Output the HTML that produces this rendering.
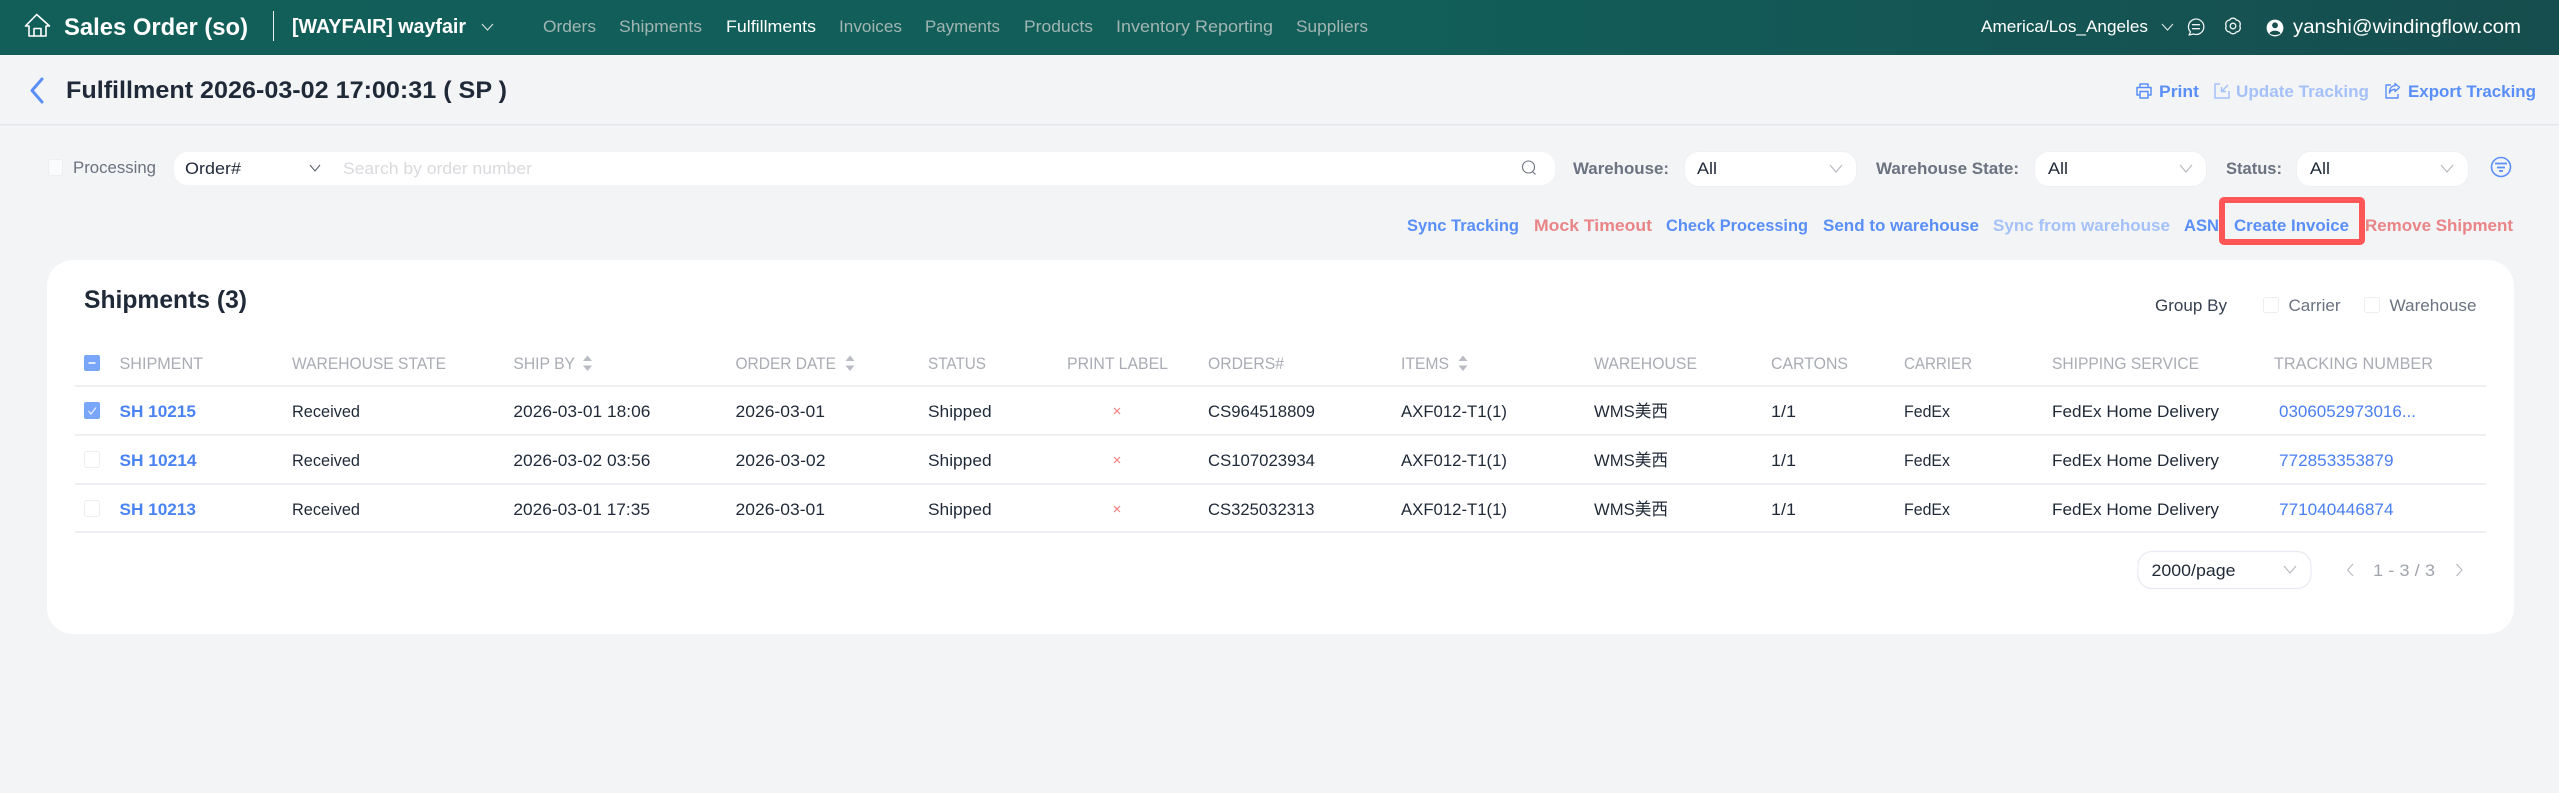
<!DOCTYPE html>
<html lang="en">
<head>
<meta charset="utf-8">
<title>Fulfillment 2026-03-02 17:00:31 ( SP )</title>
<style>
html,body{margin:0;padding:0;background:#f3f4f6;width:2559px;height:793px;overflow:hidden}
svg{display:block}
text{font-family:"Liberation Sans","Noto Sans CJK SC",sans-serif;font-size:17px;fill:#1f2937}
.b{font-weight:700}
.nav{fill:#a2b5b3}
.th{fill:#a9acb3}
.lnk{fill:#4a83f2;font-weight:700}
.trk{fill:#4a7ff2}
.act{fill:#5a8ff8;font-weight:700}
.dis{fill:#a5c1f9;font-weight:700}
.red{fill:#e98487;font-weight:700}
.lab{fill:#6b7280;font-weight:700}
.mut{fill:#6b7280}
.line{stroke:#e9eaee;stroke-width:1.6}
.chev{fill:none;stroke:#b4b7bd;stroke-width:1.1}
.cb{fill:#fff;stroke:#eceef1;stroke-width:1}
.sel{fill:#fff;stroke:#eef0f3;stroke-width:1}
.sort{fill:#b9bcc4}
.x{stroke:#f57f7f;stroke-width:1.2;fill:none}
</style>
</head>
<body>
<svg width="2559" height="793" viewBox="0 0 2559 793" xmlns="http://www.w3.org/2000/svg">
<defs>
<linearGradient id="hd" x1="0" x2="1" y1="0" y2="0">
<stop offset="0" stop-color="#125f5a"/><stop offset="0.55" stop-color="#125e59"/><stop offset="1" stop-color="#164d4e"/>
</linearGradient>
</defs>
<rect width="2559" height="793" fill="#f3f4f6"/>

<!-- top bar -->
<rect width="2559" height="55" fill="url(#hd)"/>
<g fill="none" stroke="#fff" stroke-width="1.6" stroke-linejoin="round" stroke-linecap="round">
<path d="M25.5 26 L36.7 14.5 L49.5 26 L46 26 L46 36 L29 36 L29 26 Z"/>
<path d="M34 36 V28.5 H41 V36"/>
</g>
<text x="64" y="35" class="b" style="font-size:24px;fill:#fff" textLength="184" lengthAdjust="spacingAndGlyphs">Sales Order (so)</text>
<rect x="273" y="11" width="1" height="30" fill="#e6eeee"/>
<text x="292" y="33" class="b" style="font-size:20px;fill:#fff" textLength="174" lengthAdjust="spacingAndGlyphs">[WAYFAIR] wayfair</text>
<path d="M482 24 L487.5 30 L493 24" fill="none" stroke="#cfdcdb" stroke-width="1.2"/>
<text x="543" y="32" class="nav" textLength="53" lengthAdjust="spacingAndGlyphs">Orders</text>
<text x="619" y="32" class="nav" textLength="83" lengthAdjust="spacingAndGlyphs">Shipments</text>
<text x="726" y="32" style="fill:#fff" textLength="90" lengthAdjust="spacingAndGlyphs">Fulfillments</text>
<text x="839" y="32" class="nav" textLength="63" lengthAdjust="spacingAndGlyphs">Invoices</text>
<text x="925" y="32" class="nav" textLength="75" lengthAdjust="spacingAndGlyphs">Payments</text>
<text x="1024" y="32" class="nav" textLength="69" lengthAdjust="spacingAndGlyphs">Products</text>
<text x="1116" y="32" class="nav" textLength="157" lengthAdjust="spacingAndGlyphs">Inventory Reporting</text>
<text x="1296" y="32" class="nav" textLength="72" lengthAdjust="spacingAndGlyphs">Suppliers</text>

<text x="1981" y="32" style="fill:#fff" textLength="167" lengthAdjust="spacingAndGlyphs">America/Los_Angeles</text>
<path d="M2162 24 L2167.5 30 L2173 24" fill="none" stroke="#dbe6e5" stroke-width="1.1"/>
<g fill="none" stroke="#eef4f3" stroke-width="1.3" stroke-linecap="round" stroke-linejoin="round">
<path d="M2190.5 32 A7.7 7.7 0 1 1 2193.5 34 L2189 35 Z"/>
<path d="M2192.5 24.7 H2199.5 M2192.5 28.7 H2199.5"/>
<path d="M2229.6 20.1 A4 4 0 0 1 2236.4 20.1 A4 4 0 0 1 2239.8 26 A4 4 0 0 1 2236.4 31.9 A4 4 0 0 1 2229.6 31.9 A4 4 0 0 1 2226.2 26 A4 4 0 0 1 2229.6 20.1 Z"/>
<circle cx="2233" cy="26" r="2.8"/>
</g>
<circle cx="2275" cy="28" r="8.4" fill="#fff"/>
<circle cx="2275" cy="25.3" r="2.9" fill="#15504f"/>
<path d="M2269.5 33.5 C2270.5 29.8 2279.5 29.8 2280.5 33.5 C2278 35.5 2272 35.5 2269.5 33.5 Z" fill="#15504f"/>
<text x="2293" y="33" style="font-size:19px;fill:#fff" textLength="228" lengthAdjust="spacingAndGlyphs">yanshi@windingflow.com</text>

<!-- title row -->
<path d="M42 79 L32 90.5 L42 102" fill="none" stroke="#5a8ff8" stroke-width="3" stroke-linejoin="round" stroke-linecap="round"/>
<text x="66" y="98" class="b" style="font-size:24px" textLength="441" lengthAdjust="spacingAndGlyphs">Fulfillment 2026-03-02 17:00:31 ( SP )</text>

<g fill="none" stroke="#5a8ff8" stroke-width="1.5" stroke-linejoin="round">
<path d="M2140 87 V84 H2148 V87"/>
<path d="M2139.5 95 H2137 V87.5 H2151 V95 H2148.5"/>
<path d="M2140 91.5 H2148 V98 H2140 Z"/>
</g>
<text x="2159" y="97" class="act" textLength="40" lengthAdjust="spacingAndGlyphs">Print</text>
<g fill="none" stroke="#a5c1f9" stroke-width="1.5" stroke-linejoin="round">
<path d="M2220 84 H2215 V98 H2229 V91"/>
<path d="M2228 85 L2221.5 91.5 M2221.5 87 V91.5 H2226"/>
</g>
<text x="2236" y="97" class="dis" textLength="133" lengthAdjust="spacingAndGlyphs">Update Tracking</text>
<g fill="none" stroke="#5a8ff8" stroke-width="1.4" stroke-linejoin="round">
<path d="M2391 85 H2386 V98 H2398 V94"/>
<path d="M2395 83.5 L2399.5 87.5 L2395 91.5 V89.3 C2392 89.3 2390.5 90.5 2389.5 93 C2389.5 88.5 2391.5 85.8 2395 85.7 Z"/>
</g>
<text x="2408" y="97" class="act" textLength="128" lengthAdjust="spacingAndGlyphs">Export Tracking</text>
<rect x="0" y="124" width="2559" height="1.4" fill="#e4e6ec"/>

<!-- filters -->
<rect x="48.5" y="159.5" width="14" height="16" rx="2" fill="#fafbfc" stroke="#eceef1"/>
<text x="73" y="173" class="mut" textLength="83" lengthAdjust="spacingAndGlyphs">Processing</text>
<rect x="174" y="152" width="1381" height="33" rx="14" fill="#fff"/>
<text x="185" y="174" textLength="56" lengthAdjust="spacingAndGlyphs">Order#</text>
<path d="M310 165 L315 171 L320 165" fill="none" stroke="#555b66" stroke-width="1"/>
<text x="343" y="174" style="fill:#d9dadd" textLength="189" lengthAdjust="spacingAndGlyphs">Search by order number</text>
<circle cx="1528.5" cy="167" r="6" fill="none" stroke="#6b7280" stroke-width="1.1"/>
<path d="M1532.5 171.5 L1535.5 174.5" stroke="#6b7280" stroke-width="1.1"/>

<text x="1573" y="174" class="lab" textLength="96" lengthAdjust="spacingAndGlyphs">Warehouse:</text>
<rect x="1684.5" y="151.5" width="172" height="35" rx="14" class="sel"/>
<text x="1697" y="174" textLength="20" lengthAdjust="spacingAndGlyphs">All</text>
<path d="M1830 165 L1836 172 L1842 165" class="chev"/>

<text x="1876" y="174" class="lab" textLength="143" lengthAdjust="spacingAndGlyphs">Warehouse State:</text>
<rect x="2034.5" y="151.5" width="172" height="35" rx="14" class="sel"/>
<text x="2048" y="174" textLength="20" lengthAdjust="spacingAndGlyphs">All</text>
<path d="M2180 165 L2186 172 L2192 165" class="chev"/>

<text x="2226" y="174" class="lab" textLength="56" lengthAdjust="spacingAndGlyphs">Status:</text>
<rect x="2296.5" y="151.5" width="172" height="35" rx="14" class="sel"/>
<text x="2310" y="174" textLength="20" lengthAdjust="spacingAndGlyphs">All</text>
<path d="M2441 165 L2447 172 L2453 165" class="chev"/>

<circle cx="2501" cy="167" r="9.5" fill="none" stroke="#5a8ff8" stroke-width="1.6"/>
<path d="M2495 163.5 H2507 M2497 167.5 H2505 M2499 171 H2503" stroke="#5a8ff8" stroke-width="1.8" fill="none"/>

<!-- actions -->
<text x="1407" y="231" class="act" textLength="112" lengthAdjust="spacingAndGlyphs">Sync Tracking</text>
<text x="1534" y="231" class="red" textLength="118" lengthAdjust="spacingAndGlyphs">Mock Timeout</text>
<text x="1666" y="231" class="act" textLength="142" lengthAdjust="spacingAndGlyphs">Check Processing</text>
<text x="1823" y="231" class="act" textLength="156" lengthAdjust="spacingAndGlyphs">Send to warehouse</text>
<text x="1993" y="231" class="dis" textLength="177" lengthAdjust="spacingAndGlyphs">Sync from warehouse</text>
<text x="2184" y="231" class="act" textLength="35" lengthAdjust="spacingAndGlyphs">ASN</text>
<text x="2234" y="231" class="act" textLength="115" lengthAdjust="spacingAndGlyphs">Create Invoice</text>
<text x="2365" y="231" class="red" textLength="148" lengthAdjust="spacingAndGlyphs">Remove Shipment</text>
<rect x="2222" y="200" width="140" height="42" rx="2" fill="none" stroke="#fc5656" stroke-width="6"/>

<!-- card -->
<rect x="47" y="260" width="2467" height="374" rx="26" fill="#fff"/>
<text x="84" y="308" class="b" style="font-size:25px" textLength="163" lengthAdjust="spacingAndGlyphs">Shipments (3)</text>

<text x="2155" y="311" style="fill:#374151" textLength="72" lengthAdjust="spacingAndGlyphs">Group By</text>
<rect x="2263.5" y="297.5" width="15" height="15" rx="2" class="cb"/>
<text x="2288.5" y="311" class="mut" textLength="52" lengthAdjust="spacingAndGlyphs">Carrier</text>
<rect x="2364.5" y="297.5" width="15" height="15" rx="2" class="cb"/>
<text x="2389.5" y="311" class="mut" textLength="87" lengthAdjust="spacingAndGlyphs">Warehouse</text>

<!-- table head -->
<rect x="84" y="355" width="16" height="16" rx="2" fill="#7aa6f9"/>
<rect x="88.5" y="362" width="7" height="2" fill="#dfe9fd"/>
<text x="119.5" y="369" class="th" textLength="83.5" lengthAdjust="spacingAndGlyphs">SHIPMENT</text>
<text x="292" y="369" class="th" textLength="154" lengthAdjust="spacingAndGlyphs">WAREHOUSE STATE</text>
<text x="513.4" y="369" class="th" textLength="61.6" lengthAdjust="spacingAndGlyphs">SHIP BY</text>
<path d="M583 361 L587.5 355.5 L592 361 Z M583 365.5 L587.5 371 L592 365.5 Z" class="sort"/>
<text x="735.5" y="369" class="th" textLength="100.5" lengthAdjust="spacingAndGlyphs">ORDER DATE</text>
<path d="M845.5 361 L850 355.5 L854.5 361 Z M845.5 365.5 L850 371 L854.5 365.5 Z" class="sort"/>
<text x="928" y="369" class="th" textLength="58" lengthAdjust="spacingAndGlyphs">STATUS</text>
<text x="1067" y="369" class="th" textLength="101" lengthAdjust="spacingAndGlyphs">PRINT LABEL</text>
<text x="1208" y="369" class="th" textLength="76" lengthAdjust="spacingAndGlyphs">ORDERS#</text>
<text x="1401" y="369" class="th" textLength="48" lengthAdjust="spacingAndGlyphs">ITEMS</text>
<path d="M1458.5 361 L1463 355.5 L1467.5 361 Z M1458.5 365.5 L1463 371 L1467.5 365.5 Z" class="sort"/>
<text x="1594" y="369" class="th" textLength="103" lengthAdjust="spacingAndGlyphs">WAREHOUSE</text>
<text x="1771" y="369" class="th" textLength="77" lengthAdjust="spacingAndGlyphs">CARTONS</text>
<text x="1904" y="369" class="th" textLength="68" lengthAdjust="spacingAndGlyphs">CARRIER</text>
<text x="2052" y="369" class="th" textLength="147" lengthAdjust="spacingAndGlyphs">SHIPPING SERVICE</text>
<text x="2274" y="369" class="th" textLength="159" lengthAdjust="spacingAndGlyphs">TRACKING NUMBER</text>
<path d="M75 386 H2486 M75 435 H2486 M75 484 H2486 M75 532 H2486" class="line"/>

<!-- row 1 -->
<rect x="84" y="402" width="16" height="17" rx="2" fill="#7aa6f9"/>
<path d="M88.5 411 L91 414 L96 407.5" fill="none" stroke="#eaf1fe" stroke-width="1.2"/>
<text x="119.5" y="417" class="lnk" textLength="76.5" lengthAdjust="spacingAndGlyphs">SH 10215</text>
<text x="292" y="417" textLength="68" lengthAdjust="spacingAndGlyphs">Received</text>
<text x="513.4" y="417" textLength="137" lengthAdjust="spacingAndGlyphs">2026-03-01 18:06</text>
<text x="735.5" y="417" textLength="89.5" lengthAdjust="spacingAndGlyphs">2026-03-01</text>
<text x="928" y="417" textLength="63.6" lengthAdjust="spacingAndGlyphs">Shipped</text>
<path d="M1114 408 L1120 414 M1120 408 L1114 414" class="x"/>
<text x="1208" y="417" textLength="107" lengthAdjust="spacingAndGlyphs">CS964518809</text>
<text x="1401" y="417" textLength="106" lengthAdjust="spacingAndGlyphs">AXF012-T1(1)</text>
<text x="1594" y="417" textLength="74" lengthAdjust="spacingAndGlyphs">WMS美西</text>
<text x="1771" y="417" textLength="25" lengthAdjust="spacingAndGlyphs">1/1</text>
<text x="1904" y="417" textLength="46" lengthAdjust="spacingAndGlyphs">FedEx</text>
<text x="2052" y="417" textLength="167" lengthAdjust="spacingAndGlyphs">FedEx Home Delivery</text>
<text x="2279" y="417" class="trk" textLength="137" lengthAdjust="spacingAndGlyphs">0306052973016...</text>

<!-- row 2 -->
<rect x="84.5" y="451.5" width="15" height="16" rx="2" class="cb"/>
<text x="119.5" y="466" class="lnk" textLength="77" lengthAdjust="spacingAndGlyphs">SH 10214</text>
<text x="292" y="466" textLength="68" lengthAdjust="spacingAndGlyphs">Received</text>
<text x="513.4" y="466" textLength="137" lengthAdjust="spacingAndGlyphs">2026-03-02 03:56</text>
<text x="735.5" y="466" textLength="90" lengthAdjust="spacingAndGlyphs">2026-03-02</text>
<text x="928" y="466" textLength="63.6" lengthAdjust="spacingAndGlyphs">Shipped</text>
<path d="M1114 457 L1120 463 M1120 457 L1114 463" class="x"/>
<text x="1208" y="466" textLength="107" lengthAdjust="spacingAndGlyphs">CS107023934</text>
<text x="1401" y="466" textLength="106" lengthAdjust="spacingAndGlyphs">AXF012-T1(1)</text>
<text x="1594" y="466" textLength="74" lengthAdjust="spacingAndGlyphs">WMS美西</text>
<text x="1771" y="466" textLength="25" lengthAdjust="spacingAndGlyphs">1/1</text>
<text x="1904" y="466" textLength="46" lengthAdjust="spacingAndGlyphs">FedEx</text>
<text x="2052" y="466" textLength="167" lengthAdjust="spacingAndGlyphs">FedEx Home Delivery</text>
<text x="2279" y="466" class="trk" textLength="114.5" lengthAdjust="spacingAndGlyphs">772853353879</text>

<!-- row 3 -->
<rect x="84.5" y="500.5" width="15" height="16" rx="2" class="cb"/>
<text x="119.5" y="515" class="lnk" textLength="76.5" lengthAdjust="spacingAndGlyphs">SH 10213</text>
<text x="292" y="515" textLength="68" lengthAdjust="spacingAndGlyphs">Received</text>
<text x="513.4" y="515" textLength="136.6" lengthAdjust="spacingAndGlyphs">2026-03-01 17:35</text>
<text x="735.5" y="515" textLength="89.5" lengthAdjust="spacingAndGlyphs">2026-03-01</text>
<text x="928" y="515" textLength="63.6" lengthAdjust="spacingAndGlyphs">Shipped</text>
<path d="M1114 506 L1120 512 M1120 506 L1114 512" class="x"/>
<text x="1208" y="515" textLength="106.5" lengthAdjust="spacingAndGlyphs">CS325032313</text>
<text x="1401" y="515" textLength="106" lengthAdjust="spacingAndGlyphs">AXF012-T1(1)</text>
<text x="1594" y="515" textLength="74" lengthAdjust="spacingAndGlyphs">WMS美西</text>
<text x="1771" y="515" textLength="25" lengthAdjust="spacingAndGlyphs">1/1</text>
<text x="1904" y="515" textLength="46" lengthAdjust="spacingAndGlyphs">FedEx</text>
<text x="2052" y="515" textLength="167" lengthAdjust="spacingAndGlyphs">FedEx Home Delivery</text>
<text x="2279" y="515" class="trk" textLength="114.5" lengthAdjust="spacingAndGlyphs">771040446874</text>

<!-- pagination -->
<rect x="2138" y="551.5" width="173" height="37" rx="14" fill="#fff" stroke="#e9eaf2" stroke-width="1.2"/>
<text x="2151.5" y="576" textLength="84" lengthAdjust="spacingAndGlyphs">2000/page</text>
<path d="M2284 566 L2290 573 L2296 566" class="chev"/>
<path d="M2353 564 L2347.5 570 L2353 576" fill="none" stroke="#b4b7bd" stroke-width="1.1"/>
<text x="2373" y="576" style="fill:#a0a4ac" textLength="62" lengthAdjust="spacingAndGlyphs">1 - 3 / 3</text>
<path d="M2456.5 564 L2462 570 L2456.5 576" fill="none" stroke="#b4b7bd" stroke-width="1.1"/>
</svg>
</body>
</html>
